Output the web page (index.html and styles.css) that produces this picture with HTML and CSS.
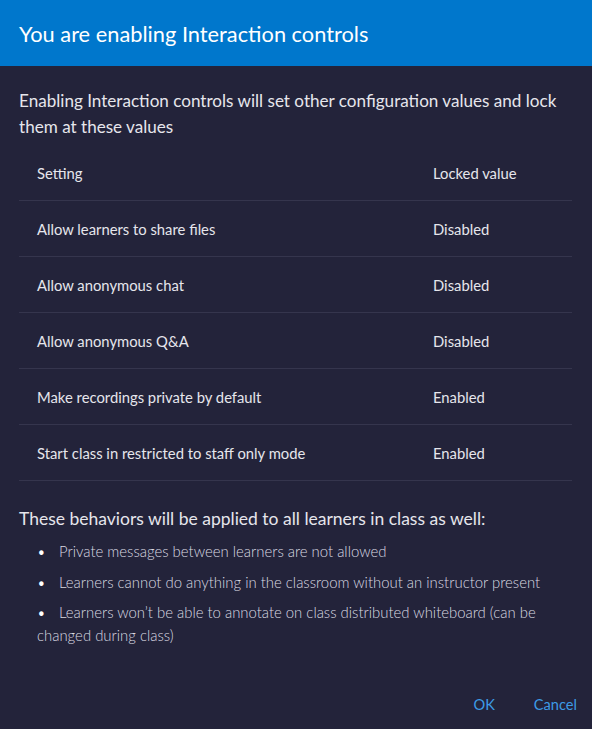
FILE: index.html
```html
<!DOCTYPE html>
<html lang="en">
<head>
    <meta charset="UTF-8">
    <meta name="viewport" content="width=device-width, initial-scale=1.0">
    <title>Interaction controls</title>
    <link rel="stylesheet" href="styles.css">
</head>
<body>
    <div class="dialog">
        <div class="dialog-header">
            <h2>You are enabling Interaction controls</h2>
        </div>
        <div class="dialog-body">
            <p class="intro">Enabling Interaction controls will set other configuration values and lock them at these values</p>
            <table class="settings">
                <thead>
                    <tr><th>Setting</th><th>Locked value</th></tr>
                </thead>
                <tbody>
                    <tr><td>Allow learners to share files</td><td>Disabled</td></tr>
                    <tr><td>Allow anonymous chat</td><td>Disabled</td></tr>
                    <tr><td>Allow anonymous Q&amp;A</td><td>Disabled</td></tr>
                    <tr><td>Make recordings private by default</td><td>Enabled</td></tr>
                    <tr><td>Start class in restricted to staff only mode</td><td>Enabled</td></tr>
                </tbody>
            </table>
            <p class="behaviors">These behaviors will be applied to all learners in class as well:</p>
            <ul class="rules">
                <li>Private messages between learners are not allowed</li>
                <li>Learners cannot do anything in the classroom without an instructor present</li>
                <li>Learners won’t be able to annotate on class distributed whiteboard (can be changed during class)</li>
            </ul>
        </div>
        <div class="dialog-footer">
            <button type="button">OK</button>
            <button type="button">Cancel</button>
        </div>
    </div>
</body>
</html>
```

FILE: styles.css
```css
/* General */
body {
    margin: 0;
    background: #23233a;
    font-family: Lato, "Open Sans", sans-serif;
    color: #e6e6ec;
}
.dialog {
    width: 592px;
    height: 729px;
    display: flex;
    flex-direction: column;
}
/* Header */
.dialog-header {
    flex-shrink: 0;
    background: #0077cc;
    height: 66px;
    display: flex;
    align-items: center;
    padding: 0 19px;
}
.dialog-header h2 {
    margin: 0;
    font-size: 21.8px;
    font-weight: normal;
    color: #ffffff;
}
/* Body */
.dialog-body {
    padding: 0 20px 0 19px;
}
.intro {
    margin: 22px 0 0;
    font-size: 17.1px;
    line-height: 26px;
}
/* Settings table */
.settings {
    width: 100%;
    border-collapse: collapse;
    font-size: 14.8px;
    margin-top: 5px;
}
.settings th,
.settings td {
    text-align: left;
    font-weight: normal;
    padding: 0 0 0 18px;
    height: 55px;
    border-bottom: 1px solid #35354d;
}
.settings th:first-child,
.settings td:first-child {
    width: 378px;
}
.behaviors {
    font-size: 17.5px;
    line-height: 22px;
    margin: 27px 0 0;
}
/* Rules list */
.rules {
    list-style: none;
    margin: 10px 0 0;
    padding: 0 0 0 18px;
    font-size: 14.9px;
    font-weight: 300;
    color: #dadae2;
}
.rules li {
    line-height: 23px;
    margin-bottom: 7.5px;
}
.rules li::before {
    content: "\2022";
    display: inline-block;
    width: 22px;
    color: #ffffff;
}
/* Footer */
.dialog-footer {
    margin-top: auto;
    display: flex;
    justify-content: flex-end;
    gap: 39px;
    padding: 0 15px 15px 0;
}
.dialog-footer button {
    background: none;
    border: none;
    padding: 0;
    font-family: inherit;
    font-size: 14.6px;
    line-height: 18px;
    color: #3d9be6;
    cursor: pointer;
}
```
